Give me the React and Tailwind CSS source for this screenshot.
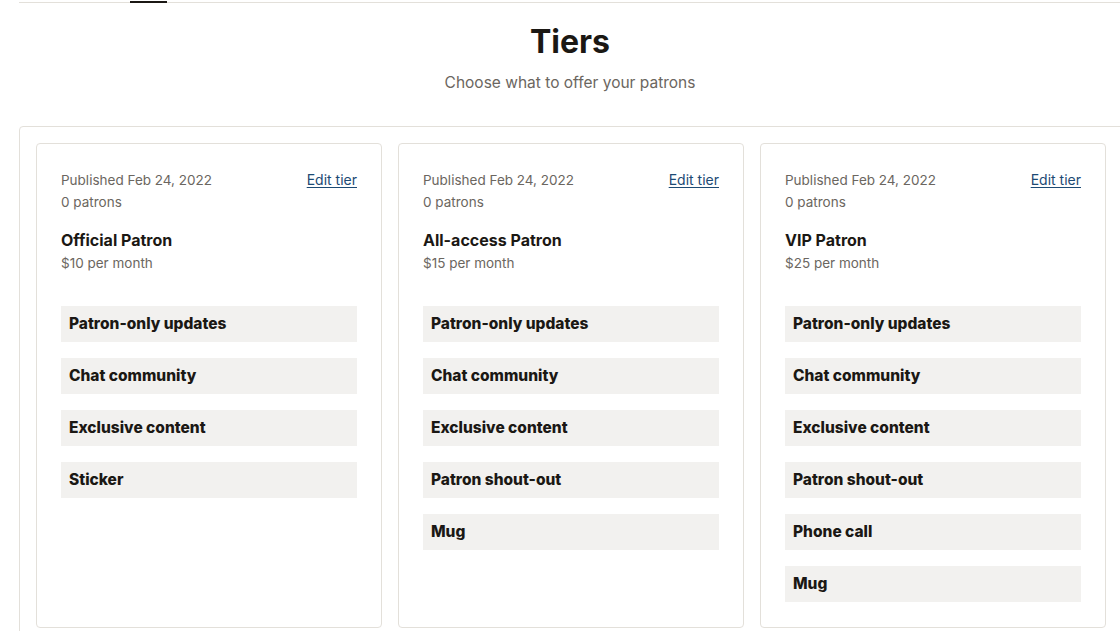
import React from 'react';

const tiers = [
    {
        name: 'Official Patron',
        price: '$10 per month',
        benefits: ['Patron-only updates', 'Chat community', 'Exclusive content', 'Sticker'],
    },
    {
        name: 'All-access Patron',
        price: '$15 per month',
        benefits: ['Patron-only updates', 'Chat community', 'Exclusive content', 'Patron shout-out', 'Mug'],
    },
    {
        name: 'VIP Patron',
        price: '$25 per month',
        benefits: ['Patron-only updates', 'Chat community', 'Exclusive content', 'Patron shout-out', 'Phone call', 'Mug'],
    },
];

const TierCard = ({ tier }) => (
    <div className="w-[346px] h-[485px] shrink-0 border border-[#e3e0da] rounded-[4px] px-6 pt-[25px] bg-white">
        <div className="flex justify-between items-start">
            <div className="text-[13.5px] leading-[22px] text-[#6b6660]">
                <p>Published Feb 24, 2022</p>
                <p>0 patrons</p>
            </div>
            <a href="#" className="text-[14px] leading-[22px] text-[#1c4a74] underline underline-offset-2">
                Edit tier
            </a>
        </div>
        <p className="mt-[15px] text-[16px] leading-[24px] font-bold text-[#1b1814]">{tier.name}</p>
        <p className="text-[13.5px] leading-[22px] text-[#6b6660]">{tier.price}</p>
        <div className="mt-8 flex flex-col gap-4">
            {tier.benefits.map((b) => (
                <div key={b} className="h-9 bg-[#f2f1ef] px-2 flex items-center text-[15.5px] font-extrabold text-[#1b1814]">
                    {b}
                </div>
            ))}
        </div>
    </div>
);

const App = () => {
    return (
        <div className="w-[1120px] h-[631px] overflow-hidden bg-white" style={{ fontFamily: 'Inter, "Noto Sans", sans-serif' }}>
            {/* Tab strip line */}
            <div className="ml-[19px] pt-[2px]">
                <div className="h-px bg-[#e3e0da] relative">
                    <div className="absolute left-[111px] -top-px w-[37px] h-[2px] bg-[#1b1814]"></div>
                </div>
            </div>
            <div className="ml-[19px] w-[1102px] text-center pt-[19px]">
                <h1 className="text-[32px] leading-[40px] font-bold text-[#1b1814]">Tiers</h1>
                <p className="mt-[11px] text-[15.5px] leading-[20px] text-[#6b6660]">Choose what to offer your patrons</p>
            </div>
            <div className="ml-[19px] mt-[33px] w-[1110px] border border-[#e3e0da] rounded-[4px] p-4 flex gap-4">
                {tiers.map((t) => (
                    <TierCard key={t.name} tier={t} />
                ))}
            </div>
        </div>
    );
};

export default App;
